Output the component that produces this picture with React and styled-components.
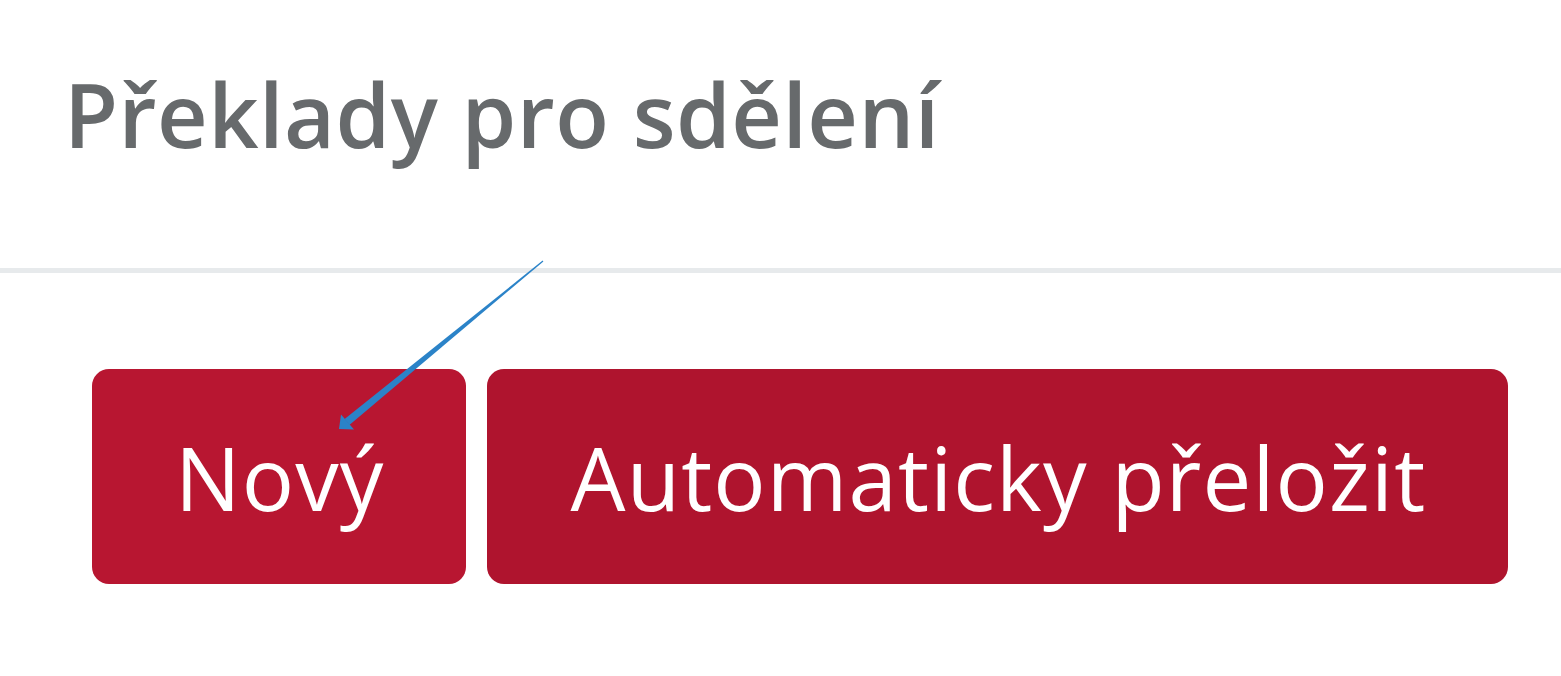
import React from "react";
import styled, { createGlobalStyle } from "styled-components";

const Global = createGlobalStyle`
  html, body { margin: 0; padding: 0; background: #ffffff; }
  body { font-family: "Open Sans", "Liberation Sans", sans-serif; }
`;

const Page = styled.div`
  position: relative;
  width: 1561px;
  height: 676px;
  overflow: hidden;
  background: #ffffff;
`;

const Header = styled.header`
  padding: 54px 0 94px 64px;
  border-bottom: 5px solid #e7eaec;
`;

const Title = styled.h2`
  margin: 0;
  font-family: "Open Sans", "Liberation Sans", sans-serif;
  font-weight: 600;
  font-size: 88px;
  line-height: normal;
  letter-spacing: 0.45px;
  color: #676a6c;
  white-space: nowrap;
`;

const Toolbar = styled.div`
  display: flex;
  gap: 21px;
  padding: 96px 0 0 92px;
`;

const Button = styled.button`
  display: flex;
  align-items: center;
  justify-content: center;
  height: 215px;
  padding: 0 82px 0 83px;
  border: none;
  border-radius: 17px;
  background: ${(p) => (p.$dark ? "#af142e" : "#b81631")};
  color: #ffffff;
  font-family: "Open Sans", "Liberation Sans", sans-serif;
  font-weight: 400;
  font-size: 87px;
  line-height: normal;
  letter-spacing: 1.15px;
  white-space: nowrap;
  cursor: pointer;
`;

const Annotation = styled.svg`
  position: absolute;
  left: 0;
  top: 0;
  pointer-events: none;
`;

export default function App() {
  return (
    <Page>
      <Global />
      <Header>
        <Title>Překlady pro sdělení</Title>
      </Header>
      <Toolbar>
        <Button>Nový</Button>
        <Button $dark>Automaticky přeložit</Button>
      </Toolbar>
      <Annotation width="1561" height="676" viewBox="0 0 1561 676">
        <polygon
          points="543.4,261.4 542.6,260.6 344.6,419.1 349.4,424.9"
          fill="#2b83c8"
        />
        <polygon points="339,429 341,414.5 354,429.5" fill="#2b83c8" />
      </Annotation>
    </Page>
  );
}
